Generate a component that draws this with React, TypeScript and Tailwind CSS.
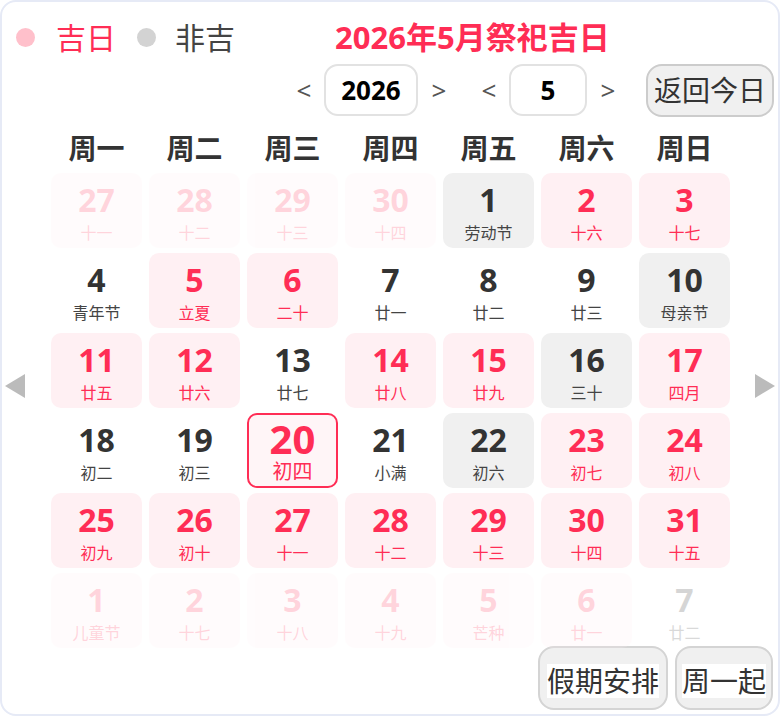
import React from "react";

type Kind = "pink" | "gray" | "none";

type Day = {
  d: number;
  lunar: string;
  kind: Kind;
  faded?: boolean;
  today?: boolean;
};

const days: Day[] = [
  { d: 27, lunar: "十一", kind: "pink", faded: true },
  { d: 28, lunar: "十二", kind: "pink", faded: true },
  { d: 29, lunar: "十三", kind: "pink", faded: true },
  { d: 30, lunar: "十四", kind: "pink", faded: true },
  { d: 1, lunar: "劳动节", kind: "gray" },
  { d: 2, lunar: "十六", kind: "pink" },
  { d: 3, lunar: "十七", kind: "pink" },

  { d: 4, lunar: "青年节", kind: "none" },
  { d: 5, lunar: "立夏", kind: "pink" },
  { d: 6, lunar: "二十", kind: "pink" },
  { d: 7, lunar: "廿一", kind: "none" },
  { d: 8, lunar: "廿二", kind: "none" },
  { d: 9, lunar: "廿三", kind: "none" },
  { d: 10, lunar: "母亲节", kind: "gray" },

  { d: 11, lunar: "廿五", kind: "pink" },
  { d: 12, lunar: "廿六", kind: "pink" },
  { d: 13, lunar: "廿七", kind: "none" },
  { d: 14, lunar: "廿八", kind: "pink" },
  { d: 15, lunar: "廿九", kind: "pink" },
  { d: 16, lunar: "三十", kind: "gray" },
  { d: 17, lunar: "四月", kind: "pink" },

  { d: 18, lunar: "初二", kind: "none" },
  { d: 19, lunar: "初三", kind: "none" },
  { d: 20, lunar: "初四", kind: "pink", today: true },
  { d: 21, lunar: "小满", kind: "none" },
  { d: 22, lunar: "初六", kind: "gray" },
  { d: 23, lunar: "初七", kind: "pink" },
  { d: 24, lunar: "初八", kind: "pink" },

  { d: 25, lunar: "初九", kind: "pink" },
  { d: 26, lunar: "初十", kind: "pink" },
  { d: 27, lunar: "十一", kind: "pink" },
  { d: 28, lunar: "十二", kind: "pink" },
  { d: 29, lunar: "十三", kind: "pink" },
  { d: 30, lunar: "十四", kind: "pink" },
  { d: 31, lunar: "十五", kind: "pink" },

  { d: 1, lunar: "儿童节", kind: "pink", faded: true },
  { d: 2, lunar: "十七", kind: "pink", faded: true },
  { d: 3, lunar: "十八", kind: "pink", faded: true },
  { d: 4, lunar: "十九", kind: "pink", faded: true },
  { d: 5, lunar: "芒种", kind: "pink", faded: true },
  { d: 6, lunar: "廿一", kind: "pink", faded: true },
  { d: 7, lunar: "廿二", kind: "none", faded: true },
];

const weekdays = ["周一", "周二", "周三", "周四", "周五", "周六", "周日"];

function Cell({ day }: { day: Day }) {
  const bg =
    day.kind === "pink" ? "bg-[#fff0f3]" : day.kind === "gray" ? "bg-[#f0f0f0]" : "";
  const numColor = day.kind === "pink" ? "text-[#ff2d55]" : "text-[#333333]";
  const lunarColor = day.kind === "pink" ? "text-[#ff2d55]" : "text-[#444444]";

  if (day.today) {
    return (
      <div className="flex flex-col items-center pt-[3px] rounded-[10px] border-2 border-[#ff2d55] bg-[#fff5f7]">
        <div className="text-[40px] leading-[42px] font-bold text-[#ff2d55]">{day.d}</div>
        <div className="text-[20px] leading-[24px] text-[#ff2d55]">{day.lunar}</div>
      </div>
    );
  }

  return (
    <div
      className={`flex flex-col items-center pt-[10px] rounded-[10px] ${bg} ${
        day.faded ? "opacity-20" : ""
      }`}
    >
      <div className={`text-[32px] leading-[34px] font-bold ${numColor}`}>{day.d}</div>
      <div className={`text-[16px] leading-[20px] mt-[6px] ${lunarColor}`}>{day.lunar}</div>
    </div>
  );
}

export default function App() {
  return (
    <div
      className="w-[780px] h-[716px] border-2 border-[#e6eaf6] rounded-[16px] bg-white overflow-hidden flex flex-col"
      style={{ fontFamily: '"Noto Sans", "Noto Sans CJK SC", sans-serif' }}
    >
      {/* legend + title */}
      <div className="h-[52px] mt-[9px] flex items-center pl-[14px]">
        <span className="w-[19px] h-[19px] rounded-full bg-[#ffc0cb]" />
        <span className="ml-[21px] text-[30px] text-[#ff2d55]">吉日</span>
        <span className="ml-[21px] w-[19px] h-[19px] rounded-full bg-[#d3d3d3]" />
        <span className="ml-[19px] text-[30px] text-[#444444]">非吉</span>
        <span className="ml-[100px] text-[31px] font-bold text-[#ff2d55]">2026年5月祭祀吉日</span>
      </div>

      {/* year / month selectors */}
      <div className="h-[54px] flex items-center justify-end pr-[4px]">
        <span className="w-[40px] text-center text-[26px] text-[#555555]">&lt;</span>
        <div className="w-[94px] h-[52px] rounded-[14px] border-2 border-[#e2e2e2] flex items-center justify-center text-[26px] font-bold text-black">
          2026
        </div>
        <span className="w-[42px] text-center text-[26px] text-[#555555]">&gt;</span>
        <span className="ml-[9px] w-[40px] text-center text-[26px] text-[#555555]">&lt;</span>
        <div className="w-[78px] h-[52px] rounded-[14px] border-2 border-[#e2e2e2] flex items-center justify-center text-[26px] font-bold text-black">
          5
        </div>
        <span className="w-[42px] text-center text-[26px] text-[#555555]">&gt;</span>
        <button className="ml-[17px] w-[128px] h-[53px] rounded-[16px] border-2 border-[#cccccc] bg-[#f0f0f0] text-[28px] text-[#333333] flex items-center justify-center">
          返回今日
        </button>
      </div>

      {/* calendar body */}
      <div className="mt-[6px] flex items-center">
        <div className="w-[49px] pl-[3px]">
          <svg width="20" height="24" viewBox="0 0 20 24">
            <polygon points="20,0 20,24 0,12" fill="#bbbbbb" />
          </svg>
        </div>

        <div className="flex flex-col">
          <div className="grid grid-cols-[repeat(7,91px)] gap-x-[7px] h-[50px] items-center">
            {weekdays.map((w) => (
              <div key={w} className="text-center text-[28px] font-bold text-[#333333]">
                {w}
              </div>
            ))}
          </div>
          <div className="grid grid-cols-[repeat(7,91px)] auto-rows-[75px] gap-x-[7px] gap-y-[5px]">
            {days.map((d, i) => (
              <Cell key={i} day={d} />
            ))}
          </div>
        </div>

        <div className="w-[48px] pl-[25px]">
          <svg width="20" height="24" viewBox="0 0 20 24">
            <polygon points="0,0 0,24 20,12" fill="#bbbbbb" />
          </svg>
        </div>
      </div>

      {/* bottom buttons */}
      <div className="-mt-[2px] flex justify-end gap-[7px] pr-[5px]">
        <button className="w-[130px] h-[64px] rounded-[16px] border-2 border-[#d4d4d4] bg-[#f0f0f0] text-[28px] text-[#333333] flex items-center justify-center pt-[6px]">
          <span className="bg-white leading-[34px]">假期安排</span>
        </button>
        <button className="w-[98px] h-[64px] rounded-[16px] border-2 border-[#d4d4d4] bg-[#f0f0f0] text-[28px] text-[#333333] flex items-center justify-center pt-[6px]">
          <span className="bg-white leading-[34px]">周一起</span>
        </button>
      </div>
    </div>
  );
}
